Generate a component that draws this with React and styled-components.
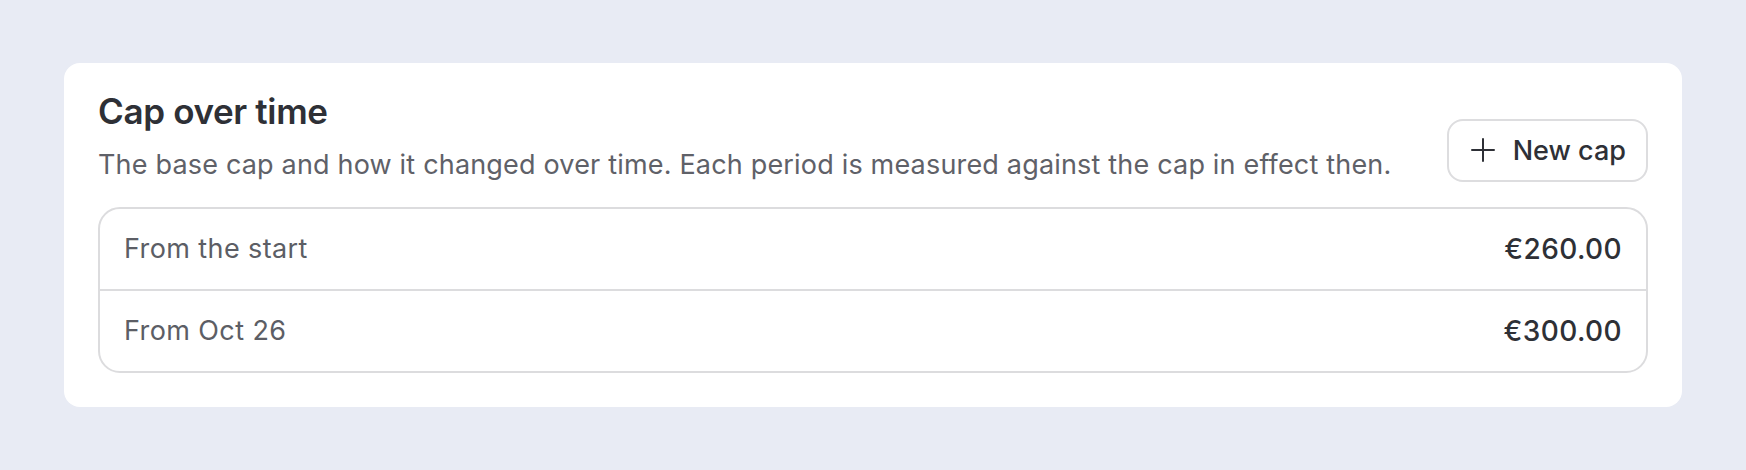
import React from "react";
import styled, { createGlobalStyle } from "styled-components";

const CAPS = [
  { label: "From the start", amount: "€260.00" },
  { label: "From Oct 26", amount: "€300.00" },
];

const Global = createGlobalStyle`
  html, body {
    margin: 0;
    background: #e8ebf4;
  }
  body {
    font-family: Inter, "Noto Sans", sans-serif;
    -webkit-font-smoothing: antialiased;
  }
`;

const Page = styled.main`
  padding: 63px 64px;
`;

const Card = styled.section`
  background: #fff;
  border-radius: 16px;
  padding: 27px 34px 34px;
`;

const Header = styled.header`
  display: flex;
  justify-content: space-between;
  align-items: flex-end;
  gap: 24px;
  margin-bottom: 23px;
`;

const Title = styled.h2`
  margin: 0;
  font-size: 35px;
  line-height: 1.2;
  font-weight: 600;
  color: #2e3036;
  letter-spacing: -0.01em;
`;

const Desc = styled.p`
  margin: 14px 0 0;
  font-size: 27px;
  line-height: 1.4;
  letter-spacing: 0.18px;
  color: #5f6168;
`;

const Button = styled.button`
  display: inline-flex;
  align-items: center;
  gap: 18px;
  height: 63px;
  margin-bottom: 2px;
  padding: 0 20px 0 22px;
  border: 2px solid #dddddf;
  border-radius: 16px;
  background: #fff;
  font-family: inherit;
  font-size: 27px;
  font-weight: 500;
  color: #2e3036;
  cursor: pointer;
  flex-shrink: 0;
`;

const List = styled.div`
  border: 2px solid #dcdcde;
  border-radius: 22px;
  overflow: hidden;
`;

const Row = styled.div`
  display: flex;
  justify-content: space-between;
  align-items: center;
  height: 80px;
  padding: 0 24px;
  & + & {
    border-top: 2px solid #dcdcde;
  }
`;

const Label = styled.span`
  font-size: 27px;
  letter-spacing: 0.4px;
  color: #5c5e65;
`;

const Amount = styled.span`
  font-size: 28px;
  font-weight: 500;
  letter-spacing: 0.4px;
  color: #2e3036;
`;

function PlusIcon() {
  return (
    <svg width="24" height="24" viewBox="0 0 24 24" fill="none" stroke="currentColor" strokeWidth="2" strokeLinecap="round">
      <path d="M12 1v22M1 12h22" />
    </svg>
  );
}

export default function App() {
  return (
    <Page>
      <Global />
      <Card>
        <Header>
          <div>
            <Title>Cap over time</Title>
            <Desc>
              The base cap and how it changed over time. Each period is measured against the cap in effect then.
            </Desc>
          </div>
          <Button>
            <PlusIcon />
            New cap
          </Button>
        </Header>
        <List>
          {CAPS.map((c) => (
            <Row key={c.label}>
              <Label>{c.label}</Label>
              <Amount>{c.amount}</Amount>
            </Row>
          ))}
        </List>
      </Card>
    </Page>
  );
}
